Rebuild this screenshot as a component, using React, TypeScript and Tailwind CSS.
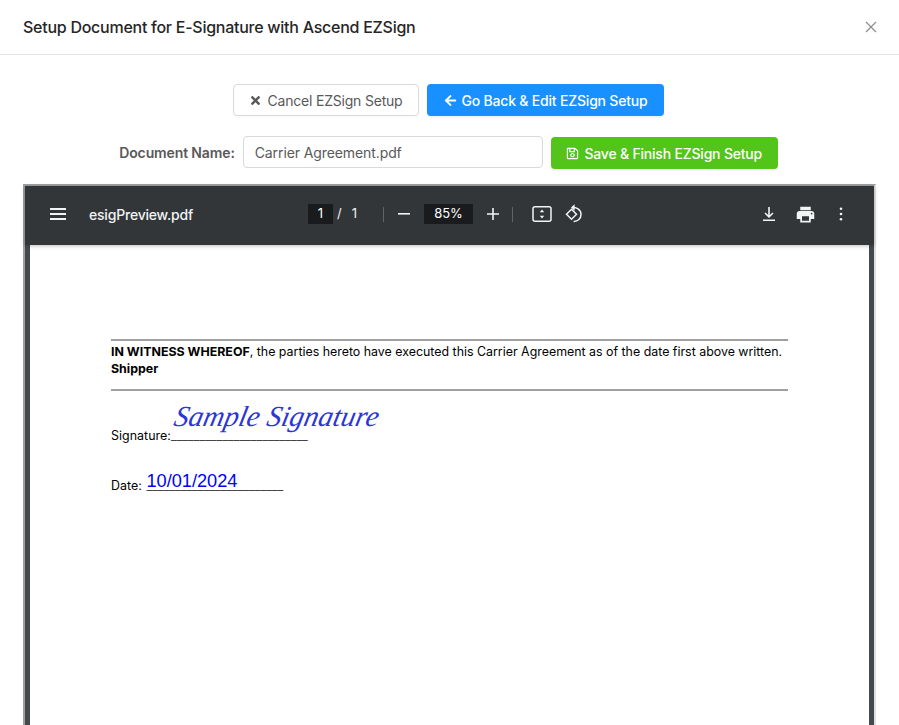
import React from 'react';
import { FaTimes, FaArrowLeft, FaRegSave } from 'react-icons/fa';

const inter = { fontFamily: 'Inter, "Liberation Sans", sans-serif' };

const Toolbar: React.FC = () => {
  return (
    <div className="h-[59px] pb-[3px] bg-[#323639] flex items-center text-white relative z-10 shrink-0 shadow-[0_1px_4px_rgba(0,0,0,0.25)]">
      <svg width="24" height="24" viewBox="0 0 24 24" fill="#f1f3f4" className="ml-[21px]">
        <path d="M4 6h16v2H4zM4 11h16v2H4zM4 16h16v2H4z" />
      </svg>
      <span className="ml-[19px] text-[14px] font-medium tracking-[-0.2px] text-[#f1f3f4] w-[219px]">esigPreview.pdf</span>
      <span className="w-[25px] h-[20px] bg-[#191b1c] text-[13px] flex items-center justify-center">1</span>
      <span className="ml-[4px] text-[13px] text-[#f1f3f4]">/</span>
      <span className="ml-[10px] text-[13px] text-[#f1f3f4]">1</span>
      <div className="ml-[26px] w-px h-[15px] bg-[#5f6368]"></div>
      <svg width="20" height="20" viewBox="0 0 20 20" fill="#f1f3f4" className="ml-[10px]">
        <path d="M4 9h12v1.6H4z" />
      </svg>
      <span className="ml-[10px] w-[49px] h-[20px] bg-[#191b1c] text-[13px] flex items-center justify-center">85%</span>
      <svg width="20" height="20" viewBox="0 0 20 20" fill="#f1f3f4" className="ml-[10px]">
        <path d="M4 9.2h12v1.6H4zM9.2 4h1.6v12H9.2z" />
      </svg>
      <div className="ml-[9px] w-px h-[15px] bg-[#5f6368]"></div>
      <svg width="20" height="20" viewBox="0 0 20 20" fill="none" className="ml-[19px]">
        <rect x="1" y="2.800" width="18" height="14.400" rx="2" stroke="#f1f3f4" strokeWidth="1.500" />
        <path d="M10 5.500l2.200 2.800H7.800zM10 14.500l2.200-2.800H7.800z" fill="#f1f3f4" />
      </svg>
      <svg width="22" height="22" viewBox="0 0 22 22" fill="none" className="ml-[10px]">
        <path d="M9.500 6.200l5 5-5 5-5-5z" stroke="#f1f3f4" strokeWidth="1.500" />
        <path d="M10 4.600c4.200-.8 9 1.800 9 6.800 0 4-3.200 7.200-7.400 7" stroke="#f1f3f4" strokeWidth="1.500" />
        <path d="M12.600 1.200L9 4.600l3.600 3.200z" fill="#f1f3f4" />
      </svg>
      <div className="ml-auto flex items-center">
        <svg width="20" height="20" viewBox="0 0 20 20" fill="#f1f3f4">
          <path d="M9.200 3h1.600v8l2.600-2.600 1.100 1.100L10 14 5.500 9.500l1.100-1.100L9.200 11zM4 15.500h12V17H4z" />
        </svg>
        <svg width="21" height="21" viewBox="0 0 24 24" fill="#f1f3f4" className="ml-[16px]">
          <path d="M19 8H5c-1.660 0-3 1.340-3 3v6h4v4h12v-4h4v-6c0-1.660-1.340-3-3-3zm-3 11H8v-5h8v5zm3-7c-.55 0-1-.45-1-1s.45-1 1-1 1 .45 1 1-.45 1-1 1zm-1-9H6v4h12V3z" />
        </svg>
        <svg width="20" height="20" viewBox="0 0 20 20" fill="#f1f3f4" className="ml-[15px] mr-[23px]">
          <circle cx="10" cy="4.800" r="1.300" />
          <circle cx="10" cy="10" r="1.300" />
          <circle cx="10" cy="15.200" r="1.300" />
        </svg>
      </div>
    </div>
  );
};

const App: React.FC = () => {
  return (
    <div className="w-[899px] h-[725px] overflow-hidden bg-white flex flex-col" style={inter}>
      <div className="h-[55px] shrink-0 border-b border-[#e5e5e5] flex items-center justify-between pl-[23px] pr-[21px]">
        <h1 className="text-[16px] font-medium tracking-[-0.26px] text-[#262626]">Setup Document for E-Signature with Ascend EZSign</h1>
        <svg width="14" height="14" viewBox="0 0 14 14" stroke="#8c8c8c" strokeWidth="1.200" fill="none">
          <path d="M2 2l10 10M12 2L2 12" />
        </svg>
      </div>

      <div className="flex justify-center gap-2 mt-[29px] pr-[2px]">
        <button className="h-8 w-[186px] rounded border border-[#d9d9d9] bg-white text-[14px] tracking-[-0.2px] text-[#595959] flex items-center justify-center gap-[5px] shadow-[0_2px_0_rgba(0,0,0,0.015)]">
          <FaTimes size={13} />
          Cancel EZSign Setup
        </button>
        <button className="h-8 w-[237px] rounded bg-[#1890ff] text-[14px] font-medium tracking-[-0.2px] text-white flex items-center justify-center gap-[5px] shadow-[0_2px_0_rgba(0,0,0,0.045)]">
          <FaArrowLeft size={13} />
          Go Back &amp; Edit EZSign Setup
        </button>
      </div>

      <div className="flex justify-center items-start mt-[20px] pr-[2px]">
        <label className="h-8 flex items-center text-[14px] font-semibold tracking-[-0.13px] text-[#595959] mr-2">Document Name:</label>
        <input
          readOnly
          value="Carrier Agreement.pdf"
          className="h-[32px] w-[300px] rounded border border-[#d9d9d9] px-[11px] text-[14px] tracking-[-0.1px] text-[#595959] outline-none"
        />
        <button className="ml-2 mt-px h-8 w-[227px] rounded bg-[#52c41a] text-[14px] font-medium tracking-[-0.2px] text-white flex items-center justify-center gap-[5px] shadow-[0_2px_0_rgba(0,0,0,0.045)]">
          <FaRegSave size={13} />
          Save &amp; Finish EZSign Setup
        </button>
      </div>

      <div className="mx-[23px] mt-[15px] flex-1 flex flex-col border-2 border-[#a0a0a0] border-r-[#e0e0e0] border-b-0 bg-[#46494c] min-h-0">
        <Toolbar />
        <div className="mx-[5px] flex-1 bg-white pt-[94px] pl-[81px] pr-[81px] relative">
          <div className="border-t-2 border-[#a0a0a0]"></div>
          <p className="mt-[2px] text-[12.4px] leading-[17px] text-black whitespace-nowrap">
            <b>IN WITNESS WHEREOF</b>, the parties hereto have executed this Carrier Agreement as of the date first above written.
          </p>
          <p className="text-[12.4px] leading-[17px] font-bold text-black">Shipper</p>
          <div className="mt-[12px] border-t-2 border-[#a0a0a0]"></div>
          <p className="mt-[36px] text-[12.4px] leading-[17px] tracking-[0.05px] text-black whitespace-nowrap">
            Signature:<span className="text-[#444]">________________________</span>
          </p>
          <span
            className="absolute left-[145px] top-[151px] text-[29px] leading-[40px] italic text-[#2b35d8] -skew-x-12 whitespace-nowrap"
            style={{ fontFamily: '"Liberation Serif", serif' }}
          >
            Sample Signature
          </span>
          <p className="mt-[31px] text-[12.4px] leading-[22px] tracking-[0.05px] text-black whitespace-nowrap">
            Date:{' '}
            <span className="ml-px relative inline-block text-[#444]">
              ________________________
              <span
                className="absolute left-0 bottom-[5px] text-[18.2px] leading-[22px] tracking-normal text-[#0000ff]"
                style={{ fontFamily: '"Liberation Sans", sans-serif' }}
              >
                10/01/2024
              </span>
            </span>
          </p>
        </div>
      </div>
    </div>
  );
};

export default App;
